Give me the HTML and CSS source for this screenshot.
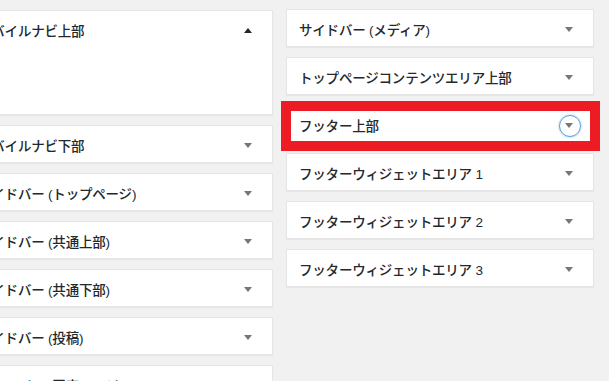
FILE: index.html
```html
<!DOCTYPE html>
<html lang="ja">
<head>
  <meta charset="UTF-8">
  <title>ウィジェット</title>
  <link rel="stylesheet" href="styles.css">
</head>
<body>
  <div class="widget-areas">
    <div class="area-column left">
      <div class="sidebar open">
        <div class="sidebar-top">
          <span class="sidebar-name">モバイルナビ上部</span>
          <span class="toggle up"></span>
        </div>
        <div class="sidebar-inside"></div>
      </div>
      <div class="sidebar">
        <div class="sidebar-top"><span class="sidebar-name">モバイルナビ下部</span><span class="toggle"></span></div>
      </div>
      <div class="sidebar">
        <div class="sidebar-top"><span class="sidebar-name">サイドバー (トップページ)</span><span class="toggle"></span></div>
      </div>
      <div class="sidebar">
        <div class="sidebar-top"><span class="sidebar-name">サイドバー (共通上部)</span><span class="toggle"></span></div>
      </div>
      <div class="sidebar">
        <div class="sidebar-top"><span class="sidebar-name">サイドバー (共通下部)</span><span class="toggle"></span></div>
      </div>
      <div class="sidebar">
        <div class="sidebar-top"><span class="sidebar-name">サイドバー (投稿)</span><span class="toggle"></span></div>
      </div>
      <div class="sidebar">
        <div class="sidebar-top"><span class="sidebar-name">サイドバー (固定ページ)</span><span class="toggle"></span></div>
      </div>
    </div>

    <div class="area-column right">
      <div class="sidebar">
        <div class="sidebar-top"><span class="sidebar-name">サイドバー (メディア)</span><span class="toggle"></span></div>
      </div>
      <div class="sidebar">
        <div class="sidebar-top"><span class="sidebar-name">トップページコンテンツエリア上部</span><span class="toggle"></span></div>
      </div>
      <div class="sidebar marked">
        <div class="sidebar-top"><span class="sidebar-name">フッター上部</span><span class="toggle focus"></span></div>
      </div>
      <div class="sidebar">
        <div class="sidebar-top"><span class="sidebar-name">フッターウィジェットエリア 1</span><span class="toggle"></span></div>
      </div>
      <div class="sidebar">
        <div class="sidebar-top"><span class="sidebar-name">フッターウィジェットエリア 2</span><span class="toggle"></span></div>
      </div>
      <div class="sidebar">
        <div class="sidebar-top"><span class="sidebar-name">フッターウィジェットエリア 3</span><span class="toggle"></span></div>
      </div>
    </div>
  </div>
</body>
</html>
```

FILE: styles.css
```css
* {
  box-sizing: border-box;
}

body {
  margin: 0;
  background-color: #f1f1f1;
  color: #23282d;
  font-family: "Liberation Sans", "Noto Sans CJK JP", sans-serif;
  overflow: hidden;
}

.widget-areas {
  display: flex;
  gap: 13px;
  margin-left: -35px;
  padding-top: 10px;
}

.area-column {
  width: 308px;
  flex-shrink: 0;
  display: flex;
  flex-direction: column;
  gap: 10px;
}

.area-column.right {
  margin-top: -1px;
}

.sidebar {
  position: relative;
  background-color: #fff;
  border: 1px solid #e5e5e5;
  box-shadow: 0 1px 1px rgba(0,0,0,0.04);
}

.sidebar-top {
  height: 36px;
  display: flex;
  align-items: center;
  justify-content: space-between;
  padding: 2px 20px 0 12px;
}

.sidebar-name {
  font-size: 13.5px;
  font-weight: 500;
  letter-spacing: -0.2px;
}

.sidebar-inside {
  height: 67px;
}

.toggle {
  position: relative;
  width: 0;
  height: 0;
  border-left: 4px solid transparent;
  border-right: 4px solid transparent;
  border-top: 5px solid #72777c;
}

.toggle.up {
  border-top: none;
  border-bottom: 5px solid #23282d;
}

.toggle.focus::before {
  content: "";
  position: absolute;
  left: -10px;
  top: -13px;
  width: 20px;
  height: 20px;
  border: 1px solid #5b9dd9;
  border-radius: 50%;
  box-shadow: 0 0 2px rgba(30,140,190,0.6);
}

.sidebar.marked::after {
  content: "";
  position: absolute;
  top: -5px;
  left: -6px;
  right: -7px;
  bottom: -9px;
  border: 10px solid #ed1c24;
}
```
